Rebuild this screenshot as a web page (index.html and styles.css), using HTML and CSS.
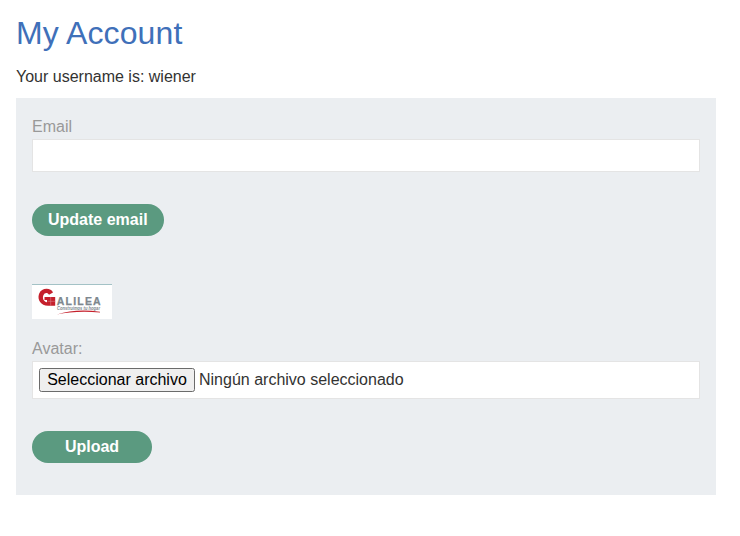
FILE: index.html
```html
<!DOCTYPE html>
<html lang="en">
<head>
<meta charset="utf-8">
<title>My Account</title>
<link rel="stylesheet" href="styles.css">
</head>
<body>
<main class="account">
  <h1 class="title">My Account</h1>
  <p class="username">Your username is: wiener</p>
  <section class="panel">
    <form class="email-form">
      <label class="label" for="email">Email</label>
      <input class="field" id="email" type="email">
      <button class="button" type="button">Update email</button>
    </form>
    <form class="avatar-form">
      <svg class="avatar" viewBox="0 0 80 35" role="img" aria-label="Galilea">
        <rect width="80" height="35" fill="#fff"/>
        <rect width="80" height="1" fill="#a3c2c6"/>
        <path d="M21 8.500C19 3.600 9.500 3.200 7 10C5 16 9 21.700 16 21.700H23.200V13H12.500V16H15V18.300C11.500 17.500 10.300 14.500 11.300 11.500C12.500 8.500 15.500 8.200 17 10.800Z" fill="#c5202c"/>
        <path d="M15.500 17.300H23.200M18.700 13V21.700" stroke="#dc7f86" stroke-width=".6"/>
        <text class="logo-name" x="24.700" y="21" textLength="44" lengthAdjust="spacing">ALILEA</text>
        <text class="logo-motto" x="25" y="25.500" textLength="43" lengthAdjust="spacingAndGlyphs">Construimos tu hogar</text>
        <path d="M25 30.600Q43 24.500 68 27.700V28.500Q43 26.500 25 30.600" fill="#c5202c"/>
      </svg>
      <label class="label" for="avatar">Avatar:</label>
      <div class="field file-field">
        <button class="file-button" id="avatar" type="button">Seleccionar archivo</button>
        <span class="file-name">Ningún archivo seleccionado</span>
      </div>
      <button class="button upload" type="button">Upload</button>
    </form>
  </section>
</main>
</body>
</html>
```
FILE: styles.css
```css
* { box-sizing: border-box; }
body { margin: 0; background: #fff; color: #333332; font: 16px/18px "Liberation Sans", Arial, sans-serif; }
.account { width: 700px; margin-left: 16px; padding-top: 14px; }
.title { margin: 0; color: #3f70b9; font-size: 32px; font-weight: 400; line-height: 38px; letter-spacing: .1px; }
.username { margin: 16px 0 12px; }
.panel { height: 397px; padding: 20px 16px 0; background: #ebeef1; }
.label { display: block; height: 21px; color: #999; }
.field { display: block; width: 100%; height: 33px; border: 1px solid #e4e4e4; background: #fff; }
.button { display: block; min-width: 120px; height: 32px; margin: 32px 0 0; padding: 0 16px; border: 0; border-radius: 16px; background: #5b9a80; color: #fff; font: bold 16px/32px "Liberation Sans", Arial, sans-serif; }
.avatar-form { margin-top: 48px; }
.avatar { display: block; width: 80px; height: 35px; margin-bottom: 21px; }
.file-field { display: flex; align-items: center; gap: 4px; height: 38px; padding: 0 6px; }
.file-button { width: 156px; height: 24px; padding: 0; border: 1px solid #6b6b6b; border-radius: 2.5px; background: #efefef; color: #000; font: inherit; }
.logo-name { fill: #7d878e; stroke: #7d878e; stroke-width: .25px; font: bold 10.5px "Liberation Sans", Arial, sans-serif; }
.logo-motto { fill: #7d878e; font: italic bold 4.5px "Liberation Sans", Arial, sans-serif; }
```
